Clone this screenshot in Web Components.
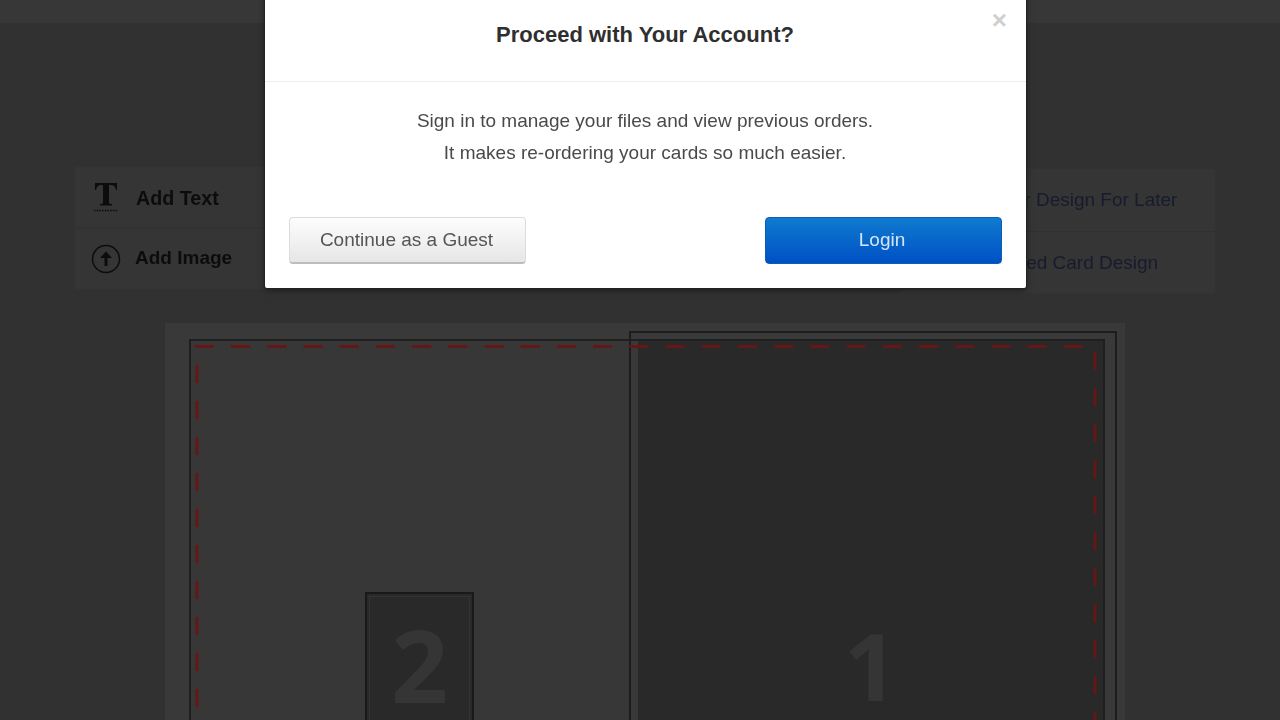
<!DOCTYPE html>
<html lang="en">

<head>
    <meta charset="UTF-8">
    <title>Proceed with Your Account</title>
    <style>
        html, body { margin: 0; height: 720px; overflow: hidden; background: #313131; }
        body { font-family: "Liberation Sans", Arial, sans-serif; }
    </style>
</head>

<body>
    <design-page></design-page>
    <account-modal>
        <span slot="title">Proceed with Your Account?</span>
        <p>Sign in to manage your files and view previous orders.</p>
        <p>It makes re-ordering your cards so much easier.</p>
    </account-modal>

    <script>
        class ToolItem extends HTMLElement {
            constructor() {
                super();
                this.attachShadow({ mode: 'open' }).innerHTML = `
                <style>
                    :host { display: flex; align-items: center; box-sizing: border-box; height: 62px;
                        background: #353535; border: 1px solid #323232; color: #0c0c0c;
                        font: bold 19.500px/24px "Liberation Sans", Arial, sans-serif; }
                    .icon { width: 61px; display: flex; justify-content: center; flex: none; }
                    .label { margin: var(--label-margin, 0); font-size: var(--label-size, inherit); }
                </style>
                <span class="icon"><slot name="icon"></slot></span><span class="label"><slot></slot></span>`;
            }
        }
        customElements.define('tool-item', ToolItem);

        class SaveLink extends HTMLElement {
            constructor() {
                super();
                this.attachShadow({ mode: 'open' }).innerHTML = `
                <style>
                    :host { display: block; box-sizing: border-box; height: 62px; padding-left: var(--indent, 0);
                        color: #161c2e; font: 19px/62px "Liberation Sans", Arial, sans-serif; white-space: nowrap; }
                </style>
                <slot></slot>`;
            }
        }
        customElements.define('save-link', SaveLink);

        class CardPiece extends HTMLElement {
            constructor() {
                super();
                this.attachShadow({ mode: 'open' }).innerHTML = `
                <style>
                    :host { position: absolute; box-sizing: border-box; background: #292929;
                        display: flex; justify-content: center; color: #353535; line-height: 1;
                        font-family: "Open Sans", "Noto Sans", sans-serif; font-weight: 700; }
                </style>
                <slot></slot>`;
            }
        }
        customElements.define('card-piece', CardPiece);

        class DesignPage extends HTMLElement {
            constructor() {
                super();
                this.attachShadow({ mode: 'open' }).innerHTML = `
                <style>
                    :host { display: block; width: 1280px; height: 720px; overflow: hidden; background: #313131;
                        filter: blur(.5px); }
                    .top { height: 23px; background: #373737; }
                    .tools { display: flex; justify-content: space-between; align-items: flex-start;
                        padding: 143px 64px 0 74px; height: 157px; }
                    .left { width: 300px; display: flex; flex-direction: column; }
                    .right { width: 316px; margin-top: 2px; background: #353535; border: 1px solid #323232;
                        box-sizing: border-box; height: 126px; }
                    .right save-link + save-link { border-top: 1px solid #303030; }
                    svg { display: block; }
                    .stage { position: relative; width: 960px; height: 420px; margin-left: 165px;
                        background: #393939; }
                    .sheet, .sheet-line { position: absolute; left: 24px; top: 16px; width: 916px; height: 420px;
                        box-sizing: border-box; }
                    .sheet { background: #373737; }
                    .sheet-line { border: 2px solid #1f1f1f; }
                    .frame { position: absolute; left: 464px; top: 8px; width: 488px; height: 420px;
                        box-sizing: border-box; background: #393939; border: 2px solid #1d1d1d; }
                    .dashes { position: absolute; left: 0; top: 0; }
                    .p1 { left: 473px; top: 18px; width: 465px; height: 400px; font-size: 94px; padding-top: 277px; }
                    .p2 { left: 200px; top: 269px; width: 109px; height: 160px; font-size: 100px; padding-top: 20px;
                        border: 2px solid #191919; outline: 1px solid #333; outline-offset: -5px; }
                </style>
                <div class="top"></div>
                <div class="tools">
                    <div class="left">
                        <tool-item style="--label-margin: 2px 0 0 0; --label-size: 19.700px">
                            <svg slot="icon" width="26" height="30" viewBox="0 0 26 30">
                                <path fill="#0c0c0c" d="M2 1h22v7h-1c-.5-3-1.800-5-5-5h-2v17c0 1.600.9 2.100 3 2.200v1.300H7v-1.300c2.100-.1 3-.6 3-2.200V3H8c-3.200 0-4.500 2-5 5H2z"/>
                                <path stroke="#0c0c0c" stroke-width="1.500" stroke-dasharray="1.500 1.200" d="M1 28.500h24"/>
                            </svg>
                            Add Text
                        </tool-item>
                        <tool-item style="--label-margin: 0 0 2px -1px; --label-size: 19px">
                            <svg slot="icon" width="30" height="30" viewBox="0 0 30 30">
                                <circle cx="15" cy="15" r="13.500" fill="none" stroke="#0c0c0c" stroke-width="1.500"/>
                                <path fill="#0c0c0c" d="M15 7.500l6 6.500h-4.500v8h-3v-8H9z"/>
                            </svg>
                            Add Image
                        </tool-item>
                    </div>
                    <div class="right">
                        <save-link style="--indent:43px">Save Your Design For Later</save-link>
                        <save-link style="--indent:29px">Load a Saved Card Design</save-link>
                    </div>
                </div>
                <div class="stage">
                    <div class="sheet"></div>
                    <div class="frame"></div>
                    <card-piece class="p1">1</card-piece>
                    <card-piece class="p2">2</card-piece>
                    <div class="sheet-line"></div>
                    <svg class="dashes" width="960" height="420" fill="none" stroke="#651616" stroke-width="3">
                        <path stroke-dasharray="19 17.200" d="M30 23.500H925"/>
                        <path stroke-dasharray="18 18" d="M32 42V420"/>
                        <path stroke-dasharray="18 18" d="M930 29V420"/>
                    </svg>
                </div>`;
            }
        }
        customElements.define('design-page', DesignPage);

        class AccountModal extends HTMLElement {
            constructor() {
                super();
                this.attachShadow({ mode: 'open' }).innerHTML = `
                <style>
                    :host { position: absolute; left: 265px; top: -20px; width: 761px; height: 308px;
                        background: #fff; box-sizing: border-box; border-radius: 2px;
                        box-shadow: 0 0 0 1px #222, 0 2px 6px rgba(0,0,0,.5); color: #4a4a4a;
                        display: flex; flex-direction: column; font-family: "Liberation Sans", Arial, sans-serif; }
                    header { height: 102px; box-sizing: border-box; padding: 40px 1px 0 0; text-align: center;
                        border-bottom: 1px solid #eee; font: bold 22px/30px "Liberation Sans", Arial, sans-serif;
                        color: #2f2f2f; position: relative; }
                    .close { position: absolute; right: 19px; top: 27px; color: #cfcfcf;
                        font: bold 26px/26px "Liberation Sans", Arial, sans-serif; }
                    .body { padding: 23px 1px 0 0; text-align: center; font-size: 19px; line-height: 32px; height: 111px;
                        box-sizing: border-box; }
                    ::slotted(p) { margin: 0; }
                    .body, button { filter: blur(.35px); }
                    footer { display: flex; justify-content: space-between; padding: 24px 24px 0; }
                    button { width: 237px; height: 47px; font: 19px "Liberation Sans", Arial, sans-serif; border-radius: 4px; padding: 0 2px 0 0; }
                    .guest { color: #555; border: 1px solid #dcdcdc; border-bottom: 2px solid #bdbdbd;
                        background: linear-gradient(#fdfdfd, #e6e6e6); }
                    .login { color: #d5e5f7; border: 1px solid #0a5fb5; padding: 0 3px 1px 0;
                        background: linear-gradient(#0f7bd0, #0050c4); }
                </style>
                <header><slot name="title"></slot><span class="close">×</span></header>
                <div class="body"><slot></slot></div>
                <footer>
                    <button class="guest">Continue as a Guest</button>
                    <button class="login">Login</button>
                </footer>`;
            }
        }
        customElements.define('account-modal', AccountModal);
    </script>
</body>

</html>
